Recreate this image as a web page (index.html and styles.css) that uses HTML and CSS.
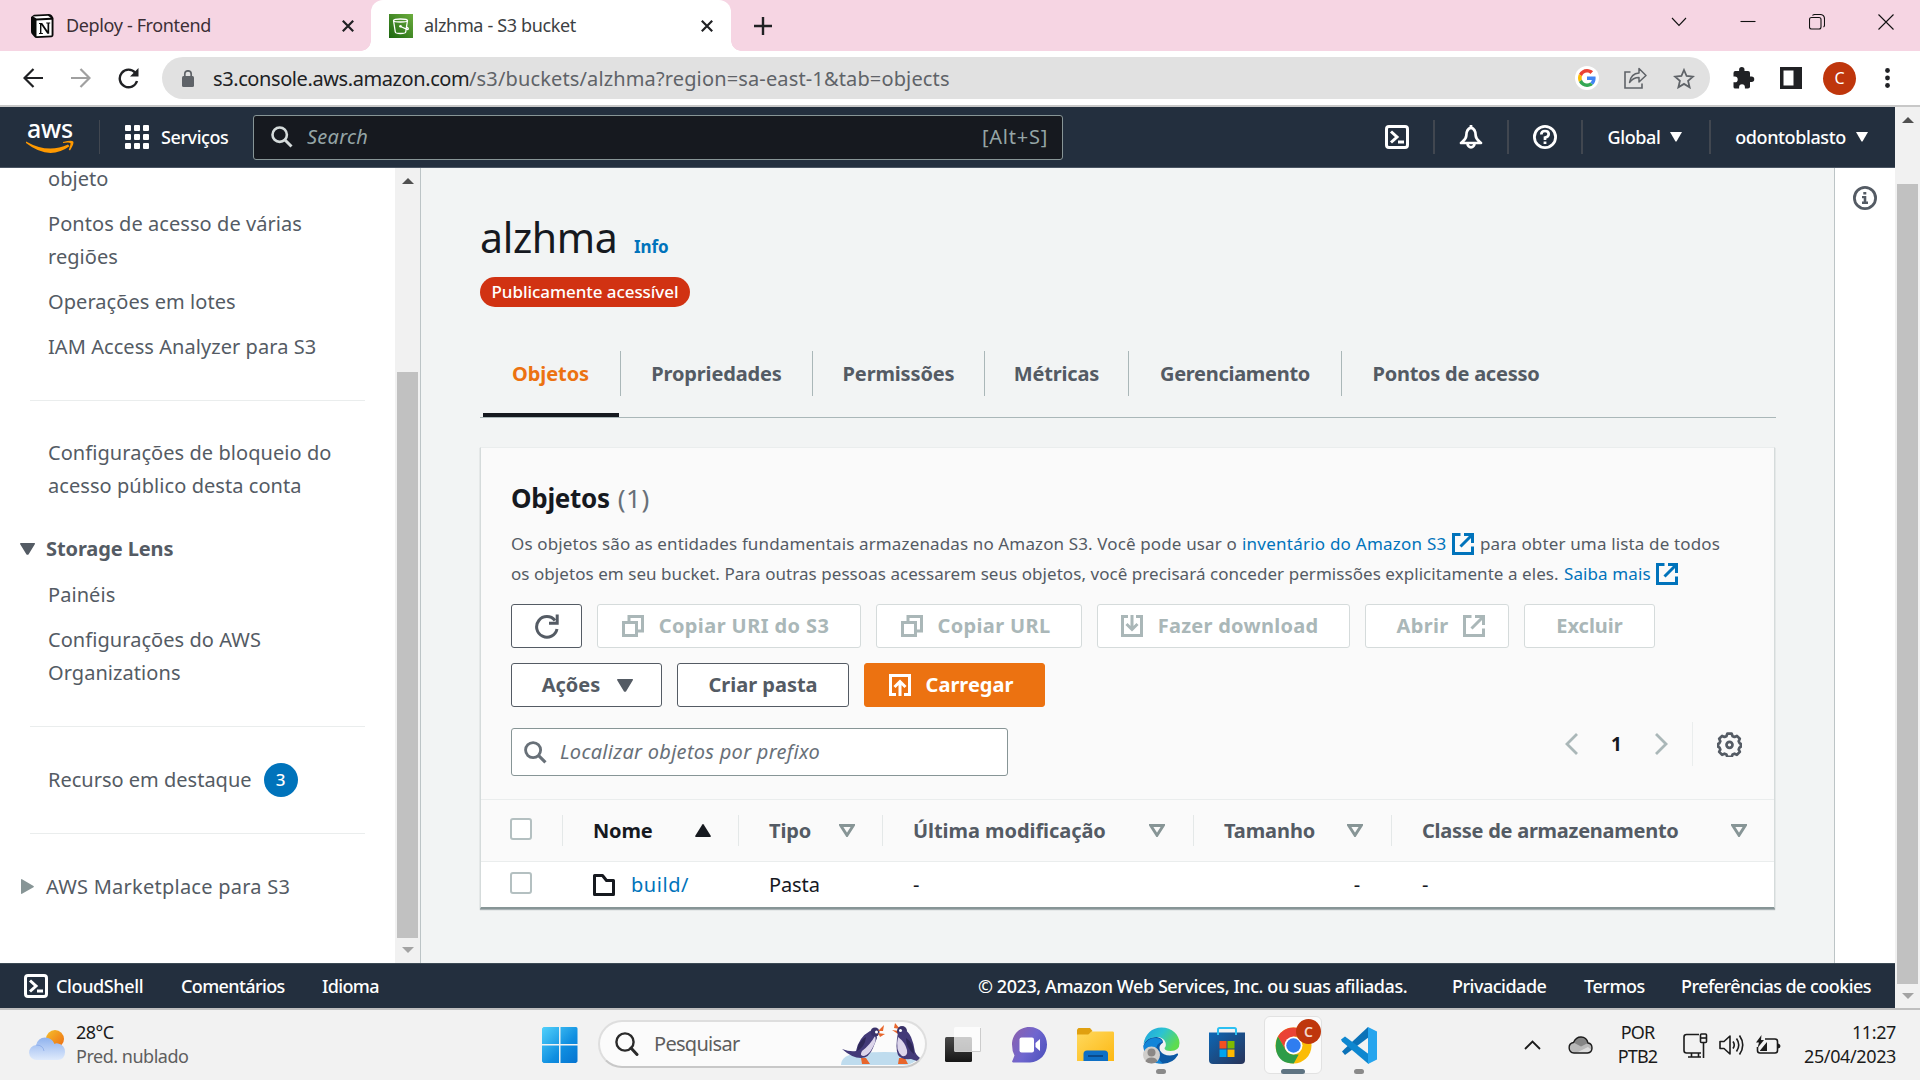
FILE: index.html
```
<!DOCTYPE html>
<html lang="pt-BR">
<head>
<meta charset="utf-8">
<title>alzhma - S3 bucket</title>
<link rel="stylesheet" href="styles.css">
</head>
<body>
<header class="tabstrip">
  <div class="btab">
    <svg width="24" height="24" viewBox="0 0 24 24"><path d="M1 3 4 0.8 19 0q2 0 3 1.600L23.500 4v17q0 2-2 2.200L7 24q-2 0-3-1.500L1.500 19.500Q1 18.500 1 17z" fill="#0a0a0a"/><path d="M3 2.500 18 1.700l2.800 2L6.500 4.600zM6.500 6.500 21.600 5.700v15.700L6.500 22.300z" fill="#fff"/><path d="M9 9h3.200l5.300 7.800V9.600h-1.300V8.500h4v1.100h-1v10.200h-1.900l-5.900-8.700v7.800h1.500v1.100H9v-1.100h1V10.100H9z" fill="#0a0a0a"/></svg>
    <span class="btab-title">Deploy - Frontend</span>
    <svg class="btab-x" width="12" height="12" viewBox="0 0 12 12"><path d="M.8.800 11.200 11.200M11.200.800.800 11.200" stroke="#202124" stroke-width="2.200"/></svg>
  </div>
  <div class="btab active">
    <svg width="24" height="24" viewBox="0 0 24 24"><defs><linearGradient id="s3" x1="0" y1="1" x2="1" y2="0"><stop offset="0" stop-color="#1b660f"/><stop offset="1" stop-color="#6cae3e"/></linearGradient></defs><path fill="url(#s3)" d="M0 0h24v24H0z"/><path d="M4.500 6.500 6.300 18q.2 1.500 5.200 1.500t5.200-1.500L18.500 6.500M4.500 6.500q0-1.500 7-1.500t7 1.500-7 1.500-7-1.500M11.500 12.500l7 3q1.500 0 .5-1.500l-1.400-1" fill="none" stroke="#fff" stroke-width="1.300"/><circle cx="11.500" cy="12.300" r="1.300" fill="#fff"/></svg>
    <span class="btab-title">alzhma - S3 bucket</span>
    <svg class="btab-x" width="12" height="12" viewBox="0 0 12 12"><path d="M.8.800 11.200 11.200M11.200.800.800 11.200" stroke="#202124" stroke-width="2.200"/></svg>
  </div>
  <svg class="newtab" width="18" height="18" viewBox="0 0 18 18"><path d="M9 0v18M0 9h18" stroke="#202124" stroke-width="2.400"/></svg>
  <div class="winctl">
    <svg width="16" height="16" viewBox="0 0 16 16"><path d="m1 4 7 7.500L15 4"/></svg>
    <svg width="16" height="16" viewBox="0 0 16 16"><path d="M.5 7.500h15"/></svg>
    <svg width="16" height="16" viewBox="0 0 16 16"><rect x=".5" y="3.500" width="11.500" height="11.500" rx="2"/><path d="M3.500 1.500Q4 .5 6 .5h5q4.500 0 4.500 4.500v6q0 1.500-1 2"/></svg>
    <svg width="16" height="16" viewBox="0 0 16 16"><path d="m.5.5 15 15M15.500.5l-15 15"/></svg>
  </div>
</header>

<div class="toolbar">
  <svg class="tb-back" width="20" height="20" viewBox="0 0 20 20"><path d="M20 10H2M10.500 1 1.500 10l9 9" fill="none" stroke="#202124" stroke-width="2.200"/></svg>
  <svg class="tb-fwd" width="20" height="20" viewBox="0 0 20 20"><path d="M0 10h18M9.500 1l9 9-9 9" fill="none" stroke="#a0a0a0" stroke-width="2.200"/></svg>
  <svg class="tb-reload" width="21" height="21" viewBox="0 0 21 21"><path d="M17.300 4.800A8.800 8.800 0 1 0 19 13" fill="none" stroke="#202124" stroke-width="2.400"/><path d="M20.500 0v8.500H12z" fill="#202124"/></svg>
  <div class="omnibox">
    <svg width="12" height="17" viewBox="0 0 12 17"><rect y="6" width="12" height="11" rx="1.500" fill="#5f6368"/><path d="M2.800 7V4a3.200 3.200 0 0 1 6.400 0v3" fill="none" stroke="#5f6368" stroke-width="1.700"/></svg>
    <span class="host">s3.console.aws.amazon.com</span><span class="path">/s3/buckets/alzhma?region=sa-east-1&amp;tab=objects</span>
    <span class="google"><svg width="18" height="18" viewBox="0 0 48 48"><path fill="#ea4335" d="M24 9.500c3.540 0 6.710 1.220 9.210 3.600l6.850-6.850C35.900 2.380 30.470 0 24 0 14.620 0 6.510 5.380 2.560 13.220l7.980 6.190C12.430 13.720 17.740 9.500 24 9.500z"/><path fill="#4285f4" d="M46.980 24.550c0-1.570-.15-3.090-.38-4.550H24v9.020h12.940c-.58 2.960-2.260 5.480-4.780 7.180l7.730 6c4.510-4.180 7.090-10.360 7.090-17.650z"/><path fill="#fbbc05" d="M10.530 28.590c-.48-1.450-.76-2.990-.76-4.590s.27-3.140.76-4.590l-7.980-6.190C.92 16.460 0 20.120 0 24c0 3.880.92 7.540 2.560 10.780l7.970-6.190z"/><path fill="#34a853" d="M24 48c6.480 0 11.930-2.130 15.890-5.810l-7.730-6c-2.150 1.450-4.920 2.300-8.160 2.300-6.260 0-11.570-4.220-13.470-9.910l-7.980 6.190C6.510 42.620 14.620 48 24 48z"/></svg></span>
    <svg class="share" width="23" height="22" viewBox="0 0 23 22"><path d="M6.500 5H1v16h17v-4.500" fill="none" stroke="#5f6368" stroke-width="1.600"/><path d="M5.500 15.500Q7 6.500 15 6V1.500l7 7-7 6.500v-4.500q-6 0-9.500 5z" fill="none" stroke="#5f6368" stroke-width="1.500" stroke-linejoin="round"/></svg>
    <svg class="star" width="22" height="21" viewBox="0 0 22 21"><path d="m11 2 2.600 6 6.400.600-4.900 4.300 1.500 6.400-5.600-3.400-5.600 3.400 1.500-6.400L2 8.600 8.400 8z" fill="none" stroke="#5f6368" stroke-width="1.800"/></svg>
  </div>
  <svg class="puzzle" width="22" height="22" viewBox="0 0 22 22"><path fill="#202124" d="M18.500 9.500H17V6q0-2-2-2h-3.500V2.700a2.700 2.700 0 0 0-5.400 0V4H2.300Q.5 4 .5 6v3.500h1.300a2.900 2.900 0 0 1 0 5.800H.5V20q0 1.500 1.800 1.500h3.800v-1.300a2.900 2.900 0 0 1 5.800 0v1.300H15q2 0 2-1.800V15h1.500a2.700 2.700 0 0 0 0-5.500z"/></svg>
  <svg class="panel" width="22" height="22" viewBox="0 0 22 22"><path fill="#202124" fill-rule="evenodd" d="M0 0h22v22H0zM3.500 3.500v15h10v-15z"/></svg>
  <span class="avatar">C</span>
  <svg width="5" height="20" viewBox="0 0 5 20"><g fill="#202124"><circle cx="2.500" cy="2.500" r="2.400"/><circle cx="2.500" cy="10" r="2.400"/><circle cx="2.500" cy="17.500" r="2.400"/></g></svg>
</div>

<div class="viewport">
 <div class="page">
  <nav class="awsnav">
    <div class="logo"><span>aws</span><svg width="48" height="14" viewBox="0 0 48 14"><path d="M0 1.500Q22 14 42 4.500l1.500 1.800Q23 21 0 3zM37 2q8.500-2.400 10.200-.6 1.200 2-3.200 9l-1.200-.6q2.300-5.800 1.500-6.800-.9-.9-7.300 0z" fill="#f90"/></svg></div>
    <div class="services">
      <svg width="24" height="24" viewBox="0 0 24 24" fill="#fff"><rect width="6" height="6" rx="1"/><rect x="9" width="6" height="6" rx="1"/><rect x="18" width="6" height="6" rx="1"/><rect y="9" width="6" height="6" rx="1"/><rect x="9" y="9" width="6" height="6" rx="1"/><rect x="18" y="9" width="6" height="6" rx="1"/><rect y="18" width="6" height="6" rx="1"/><rect x="9" y="18" width="6" height="6" rx="1"/><rect x="18" y="18" width="6" height="6" rx="1"/></svg>
      <span>Serviços</span>
    </div>
    <div class="navsearch">
      <svg width="22" height="22" viewBox="0 0 22 22"><circle cx="8.700" cy="8.700" r="7.200" fill="none" stroke="#d5dbdb" stroke-width="2.600"/><path d="m14 14 6.500 6.500" stroke="#d5dbdb" stroke-width="3"/></svg>
      <em>Search</em><span>[Alt+S]</span>
    </div>
    <div class="navright">
      <div class="ni shell"><svg width="24" height="24" viewBox="0 0 24 24"><rect x="1.500" y="1.500" width="21" height="21" rx="2.500" fill="none" stroke="#fff" stroke-width="3"/><path d="m6 6.500 6 5.500-6 5.500M13 17h6" fill="none" stroke="#fff" stroke-width="3"/></svg></div>
      <div class="ni bell"><svg width="24" height="24" viewBox="0 0 24 24"><path d="M12 2.500C8 4 7.300 7 7.300 10.500 7.300 14 4.500 15.500 2 18h20c-2.500-2.500-5.300-4-5.300-7.500C16.700 7 16 4 12 2.500z" fill="none" stroke="#fff" stroke-width="2.700" stroke-linejoin="round"/><path d="M12 0v3M8.500 18.500a3.500 3.800 0 0 0 7 0" fill="none" stroke="#fff" stroke-width="2.700"/></svg></div>
      <div class="ni help"><svg width="24" height="24" viewBox="0 0 24 24"><circle cx="12" cy="12" r="10.600" fill="none" stroke="#fff" stroke-width="2.800"/><path d="M8.300 9.500q0-3.500 3.700-3.500t3.700 3-3.700 3.600V15" fill="none" stroke="#fff" stroke-width="2.700"/><path d="M10.600 16.500h2.800V19h-2.800z" fill="#fff"/></svg></div>
      <div class="ni global"><span>Global</span><svg width="12" height="10" viewBox="0 0 12 10"><path d="M0 0h12L6.500 9.500h-1z" fill="#fff"/></svg></div>
      <div class="ni user"><span>odontoblasto</span><svg width="12" height="10" viewBox="0 0 12 10"><path d="M0 0h12L6.500 9.500h-1z" fill="#fff"/></svg></div>
    </div>
  </nav>

  <div class="body">
    <aside class="side">
      <ul class="first"><li>objeto</li><li>Pontos de acesso de várias<br>regiões</li><li>Operações em lotes</li><li>IAM Access Analyzer para S3</li></ul>
      <hr>
      <p>Configurações de bloqueio do<br>acesso público desta conta</p>
      <div class="group lens"><svg width="15" height="12" viewBox="0 0 15 12"><path d="M.5 0h14q.8.500.3 1.200L8.500 11.500q-1 .7-2 0L.2 1.200Q0 .3.5 0z" fill="#545b64"/></svg><b>Storage Lens</b></div>
      <ul><li>Painéis</li><li>Configurações do AWS<br>Organizations</li></ul>
      <hr>
      <p class="feat">Recurso em destaque<span class="count">3</span></p>
      <hr>
      <div class="group mkt"><svg width="15" height="15" viewBox="0 0 15 15"><path d="M1 .6Q1.300-.2 2 .3L13.500 7q.8.600 0 1.200L2 14.800q-.8.300-1-.4z" fill="#879596"/></svg><span>AWS Marketplace para S3</span></div>
    </aside>
    <div class="sbar inner"><i class="up"></i><div class="thumb"></div><i class="down"></i></div>

    <main>
      <div class="title"><h1>alzhma</h1><a>Info</a></div>
      <span class="pill">Publicamente acessível</span>
      <div class="tabs">
        <div class="on t1"><span>Objetos</span></div><div class="t2"><span>Propriedades</span></div><div class="t3"><span>Permissões</span></div><div class="t4"><span>Métricas</span></div><div class="t5"><span>Gerenciamento</span></div><div class="t6"><span>Pontos de acesso</span></div>
      </div>
      <section class="card">
        <div class="cardtop">
        <h2>Objetos <span>(1)</span></h2>
        <div class="desc">
          <div><span class="d1">Os objetos são as entidades fundamentais armazenadas no Amazon S3. Você pode usar o</span><a class="d2">inventário do Amazon S3</a><svg class="ext" width="22" height="22" viewBox="0 0 22 22"><path d="M8.500 1.500h-7v19h19v-7M12 1.500h8.500V10M20 2 8.500 13.500" /></svg><span class="d3">para obter uma lista de todos</span></div>
          <div><span class="d4">os objetos em seu bucket. Para outras pessoas acessarem seus objetos, você precisará conceder permissões explicitamente a eles.</span><a class="d5">Saiba mais</a><svg class="ext" width="22" height="22" viewBox="0 0 22 22"><path d="M8.500 1.500h-7v19h19v-7M12 1.500h8.500V10M20 2 8.500 13.500" /></svg></div>
        </div>
        <div class="btns">
          <div class="btn refresh"><svg width="25" height="25" viewBox="0 0 25 25"><path d="M21 6.500A10.300 10.300 0 1 0 23 15" fill="none" stroke="#545b64" stroke-width="3"/><path d="M23.200.5v8.700H15" fill="none" stroke="#545b64" stroke-width="3"/></svg></div>
          <div class="btn off b-uri"><svg width="22" height="22" viewBox="0 0 22 22"><path d="M1.500 7.500h13v13h-13zM7 7V1.500h13.500V16H15"/></svg><span>Copiar URI do S3</span></div>
          <div class="btn off b-url"><svg width="22" height="22" viewBox="0 0 22 22"><path d="M1.500 7.500h13v13h-13zM7 7V1.500h13.500V16H15"/></svg><span>Copiar URL</span></div>
          <div class="btn off b-dl"><svg width="22" height="22" viewBox="0 0 22 22"><path d="M7 1.500H1.500v19h19v-19H15M11 0v14M5.500 9l5.500 5.500L16.500 9"/></svg><span>Fazer download</span></div>
          <div class="btn off b-open"><span>Abrir</span><svg width="22" height="22" viewBox="0 0 22 22"><path d="M8.500 1.500h-7v19h19v-7M12 1.500h8.500V10M20 2 8.500 13.500"/></svg></div>
          <div class="btn off b-del"><span>Excluir</span></div>
          <div class="btn b-act"><span>Ações</span><svg width="16" height="13" viewBox="0 0 16 13"><path d="M.5 0h15q.8.500.3 1.200L9 12.500q-1 .7-2 0L.2 1.200Q0 .3.500 0z" fill="#545b64"/></svg></div>
          <div class="btn b-new"><span>Criar pasta</span></div>
          <div class="btn prim b-up"><svg width="22" height="22" viewBox="0 0 22 22"><path d="M7 20.500H1.500v-19h19v19H15M11 22V7.500M5.500 13 11 7.500l5.500 5.500"/></svg><span>Carregar</span></div>
        </div>
        <div class="filter">
          <div class="finput"><svg width="23" height="23" viewBox="0 0 22 22"><circle cx="8.700" cy="8.700" r="7.200" fill="none" stroke="#687078" stroke-width="2.700"/><path d="m14 14 6.500 6.500" stroke="#687078" stroke-width="3"/></svg><em>Localizar objetos por prefixo</em></div>
          <div class="pager">
            <svg width="13" height="22" viewBox="0 0 13 22"><path d="M12 1 2 11l10 10" /></svg><b>1</b><svg width="13" height="22" viewBox="0 0 13 22"><path d="m1 1 10 10L1 21"/></svg>
          </div>
          <svg class="gear" width="25" height="25" viewBox="0 0 25 25"><path d="M10.300 1.700h4.400l.9 2.500 1.900.8 2.400-1.100 2.900 2.900-1.100 2.400.8 1.900 1.400.9v2.600l-1.400 1-.8 1.900 1.100 2.400-2.900 2.900-2.400-1.100-1.900.8-.9 2.300h-4.400l-.9-2.300-1.900-.8-2.400 1.100-2.900-2.900 1.100-2.400-.8-1.900-1.400-1v-2.600l1.400-.9.8-1.900-1.100-2.400 2.900-2.900 2.400 1.100 1.900-.8z" fill="none" stroke="#545b64" stroke-width="2.700" stroke-linejoin="round"/><circle cx="12.500" cy="12.800" r="3" fill="none" stroke="#545b64" stroke-width="2.700"/></svg>
        </div>
        </div>
        <div class="row head">
          <div class="c0"><i class="chk"></i></div>
          <div class="c1"><span>Nome</span><svg width="16" height="13" viewBox="0 0 16 13"><path class="solid" d="M7.300.4Q8-.2 8.700.4L15.900 12q0 .8-.8 1H.9q-.8-.2-.8-1z"/></svg></div>
          <div class="c2"><span>Tipo</span><svg width="16" height="13" viewBox="0 0 16 13"><path d="M1.700 1.500h12.600L8 11.300z"/></svg></div>
          <div class="c3"><span>Última modificação</span><svg width="16" height="13" viewBox="0 0 16 13"><path d="M1.700 1.500h12.600L8 11.300z"/></svg></div>
          <div class="c4"><span>Tamanho</span><svg width="16" height="13" viewBox="0 0 16 13"><path d="M1.700 1.500h12.600L8 11.300z"/></svg></div>
          <div class="c5"><span>Classe de armazenamento</span><svg width="16" height="13" viewBox="0 0 16 13"><path d="M1.700 1.500h12.600L8 11.300z"/></svg></div>
        </div>
        <div class="row data">
          <div class="c0"><i class="chk"></i></div>
          <div class="c1"><svg width="22" height="22" viewBox="0 0 22 22"><path d="M1.500 1.500h8l4 5h7v14h-19z" fill="none" stroke="#16191f" stroke-width="3" stroke-linejoin="round"/></svg><a>build/</a></div>
          <div class="c2"><span>Pasta</span></div><div class="c3">-</div><div class="c4">-</div><div class="c5">-</div>
        </div>
      </section>
    </main>
    <div class="help-rail"><svg width="24" height="24" viewBox="0 0 24 24"><circle cx="12" cy="12" r="10.600" fill="none" stroke="#545b64" stroke-width="2.800"/><path d="M10.300 6h3v2.500h-3zM9 10h4.300v5.600H15V18H9v-2.400h1.700v-3.300H9z" fill="#545b64"/></svg></div>
  </div>

  <footer class="awsfoot">
    <svg width="24" height="24" viewBox="0 0 24 24"><rect x="1.500" y="1.500" width="21" height="21" rx="2.500" fill="none" stroke="#fff" stroke-width="3"/><path d="m6 6.500 6 5.500-6 5.500M13 17h6" fill="none" stroke="#fff" stroke-width="3"/></svg>
    <span class="f1">CloudShell</span><span class="f2">Comentários</span><span class="f3">Idioma</span>
    <span class="f4">© 2023, Amazon Web Services, Inc. ou suas afiliadas.</span><span class="f5">Privacidade</span><span class="f6">Termos</span><span class="f7">Preferências de cookies</span>
  </footer>
 </div>
 <div class="sbar outer"><i class="up"></i><div class="thumb"></div><i class="down"></i></div>
</div>

<div class="taskbar">
  <div class="weather">
    <svg width="36" height="31" viewBox="0 0 36 31"><defs><linearGradient id="sun" x1="0" y1="0" x2="1" y2="1"><stop offset="0" stop-color="#f5c02c"/><stop offset="1" stop-color="#ee6a12"/></linearGradient><linearGradient id="cl" x1="0" y1="0" x2="0" y2="1"><stop offset="0" stop-color="#8fb2ee"/><stop offset="1" stop-color="#dfeafc"/></linearGradient></defs><circle cx="26" cy="9" r="9" fill="url(#sun)"/><path d="M8 30a7.500 7.500 0 0 1-.8-15Q9 7.500 16 7.500q7 0 9.500 6.500Q27 13 29 13.500q7 1.500 7 8.500t-7 8z" fill="url(#cl)"/><path d="M7.200 15Q14 15 15 21" fill="none" stroke="#7c9fe4" stroke-width="1" opacity=".6"/></svg>
    <div><span class="w1">28°C</span><span class="w2">Pred. nublado</span></div>
  </div>
  <svg class="win" width="36" height="36" viewBox="0 0 36 36"><defs><linearGradient id="wg" x1="0" y1="0" x2="1" y2="1"><stop offset="0" stop-color="#52d1fb"/><stop offset=".6" stop-color="#0f8ee0"/><stop offset="1" stop-color="#0573d0"/></linearGradient></defs><path fill="url(#wg)" d="M1.500 0H17v17H0V1.500zM18.500 0H34q1.500 0 1.500 1.500V17h-17zM0 18.500h17V36H1.500L0 34.500zM18.500 18.500h17v16L34 36H18.500z"/></svg>
  <div class="tsearch">
    <svg class="mag" width="24" height="24" viewBox="0 0 24 24"><circle cx="10" cy="10" r="8.600" fill="none" stroke="#2a2a2a" stroke-width="2.400"/><path d="m16 16 6 6.500" stroke="#2a2a2a" stroke-width="3" stroke-linecap="round"/></svg>
    <span>Pesquisar</span>
    <svg class="peng" width="82" height="42" viewBox="0 0 82 42"><path d="M0 42q0-11 20-12 25-2 45 0 12 1 13 4-6 8-14 8z" fill="#bfdcee"/><path d="M1 26q8 3 14 2 3-14 14-20l6 1 1 6q-2 5-4 10-4 10-12 10-9 0-19-9z" fill="#433a78"/><path d="M34 13q2 4-2 11-4 8-9 9-5 0-2-5 8-6 13-15z" fill="#dcd5ea"/><path d="M25 14q-8 4-9 14 8-4 9-14z" fill="#2e2858"/><circle cx="34" cy="9" r="4.500" fill="#3a3269"/><circle cx="35.500" cy="9" r="1.500" fill="#fff"/><path d="m37 8 6-6-1 6zm0 2 7 1-5 3zM20 35h5l4 6h-8zM58 35h6l3 6h-10z" fill="#e8662c"/><path d="m59 6-5-6-1 5zm-1 2-7-1 6 4z" fill="#e8662c"/><circle cx="61" cy="8" r="5" fill="#3a3269"/><path d="M57 9q8-6 13 5 3 7 4 15 3 6 8 7l-3 3-9-3q-10 1-13-4-3-7 0-23z" fill="#433a78"/><path d="M57 14q-3 14 4 19 6 1 5-6-2-8-9-13z" fill="#dcd5ea"/><path d="M65 15q8 5 8 16-8-6-8-16z" fill="#2e2858"/><circle cx="59.500" cy="7.500" r="1.500" fill="#fff"/></svg>
  </div>
  <div class="ti taskview"><svg width="36" height="36" viewBox="0 0 36 36"><defs><linearGradient id="tv" x1="0" y1="0" x2="0" y2="1"><stop offset="0" stop-color="#4a4a4a"/><stop offset="1" stop-color="#161616"/></linearGradient></defs><rect y="10" width="27" height="25" rx="1.500" fill="url(#tv)"/><rect x="9" y="0" width="27" height="25" rx="1.500" fill="#fff" opacity=".72"/><path d="M35.500 1v23.500H10" stroke="#ccc" fill="none"/></svg></div>
  <div class="ti"><svg width="35" height="36" viewBox="0 0 35 36"><defs><linearGradient id="ch" x1="0" y1=".2" x2="1" y2=".8"><stop offset="0" stop-color="#8a62b0"/><stop offset=".5" stop-color="#6f66cf"/><stop offset="1" stop-color="#4e52bd"/></linearGradient></defs><path d="M17.500 0C28 0 35 8 35 17.500S28 35 18 35.500H1q-1.500-.500-.5-2l2-5Q0 24 0 17.500C0 8 7 0 17.500 0z" fill="url(#ch)"/><rect x="7.500" y="10.500" width="14.500" height="15" rx="2" fill="#fff"/><path d="M23.500 16 28 12v12l-4.500-4z" fill="#fff"/></svg></div>
  <div class="ti"><svg width="37" height="34" viewBox="0 0 37 34"><defs><linearGradient id="fo" x1="0" y1="0" x2="1" y2="1"><stop offset="0" stop-color="#ffd95e"/><stop offset="1" stop-color="#fdb813"/></linearGradient></defs><path d="M1.500 0H13l2.500 3-4 4H0V1.500z" fill="#e0a010"/><path d="M0 6.500h11.500L14.500 3.500H36q1 0 1 1.500v28H0z" fill="url(#fo)"/><path d="M6.500 33v-7q0-3.500 3.500-3.500h17.500q3.500 0 3.500 3.500v7z" fill="#0f6fc4"/><path d="M11 28h15" stroke="#0a4a8a" stroke-width="2"/></svg></div>
  <div class="ti run"><svg width="37" height="37" viewBox="0 0 37 37"><defs><linearGradient id="e1" x1="0" y1="0" x2="1" y2=".5"><stop offset="0" stop-color="#1d9fe0"/><stop offset=".5" stop-color="#2cc3d2"/><stop offset="1" stop-color="#5edc50"/></linearGradient></defs><path d="M.5 18.500Q3 9 14 10q6 1 6 5.500-5 3-3 8 3 5 10 5 4 0 7-2 1.500-.500 1 1.500-5 8.500-15 8.700Q1 36 .5 18.500z" fill="#0c59a4"/><path d="M.5 19Q5 10.500 13 11q6 .5 6 4-6 1-6 9 0 7 7 12.500-10 1-16-7-3.800-5-3.500-10.500z" fill="#1285d8"/><path d="M.5 17C2 7 9 .5 18.500.5 29 .5 36.500 8 36.500 16q0 8-9 8-6-.2-6-3 2-2 1-5.500-2-5.500-9-5.500Q5 10 .5 17z" fill="url(#e1)"/><circle cx="8.500" cy="28" r="8.500" fill="#d0cecb"/><circle cx="8.500" cy="25.500" r="4" fill="#8b8886"/><path d="M2.500 34.500q1-4 6-4t6 4q-2.500 2-6 2t-6-2z" fill="#8b8886"/></svg></div>
  <div class="ti"><svg width="36" height="37" viewBox="0 0 36 37"><defs><linearGradient id="st" x1="0" y1="0" x2="1" y2="1"><stop offset="0" stop-color="#0d67b5"/><stop offset="1" stop-color="#283358"/></linearGradient></defs><path d="M9 8V2.500Q9 1 10.500 1h15Q27 1 27 2.500V8" fill="none" stroke="#2cc0f2" stroke-width="2"/><path d="M0 5.500h36V33q0 4-4 4H4q-4 0-4-4z" fill="url(#st)"/><path d="M9 5v3M27 5v3" stroke="#2cc0f2" stroke-width="2"/><path fill="#f25022" d="M10.500 14h7v7.500h-7z"/><path fill="#7fba00" d="M18.500 14h7v7.500h-7z"/><path fill="#00a4ef" d="M10.500 22.500h7V30h-7z"/><path fill="#ffb900" d="M18.500 22.500h7V30h-7z"/></svg></div>
  <div class="ti tile run"><svg width="37" height="37" viewBox="0 0 37 37"><circle cx="18.500" cy="18.500" r="18" fill="#fbbc05"/><path d="M18.500.5Q28.500.5 34 9.500H18.500L10.700 23 2.900 9.500Q8.500.5 18.500.5z" fill="#ea4335"/><path d="M2.900 9.500 10.700 23q3 4.500 8 4.500h5l-5 9Q5 36.500 1.500 25-.5 16 2.900 9.500z" fill="#2e9c48"/><circle cx="18.500" cy="18.500" r="9" fill="#fff"/><circle cx="18.500" cy="18.500" r="7.200" fill="#2f7df0"/></svg><span class="badge">C</span></div>
  <div class="ti run"><svg width="37" height="37" viewBox="0 0 37 37"><path d="M27 0 4 21.500 1 24.500l3 3.500 24-18z" fill="#0b72b8"/><path d="m0 12.500 4-3L27.500 27V37L1 14.500z" fill="#0e87d0"/><path d="m27 0 9 4.500v28L27 37z" fill="#26a5ee"/></svg></div>
  <div class="tray">
    <svg class="chev" width="17" height="10" viewBox="0 0 17 10"><path d="m1 9 7.500-7.500L16 9" fill="none" stroke="#1b1b1b" stroke-width="1.800"/></svg>
    <svg class="cloud" width="25" height="18" viewBox="0 0 25 18"><path d="M6 17A5.300 5.300 0 0 1 5.500 6.500Q8 1 13 1q5.500 0 7 6 4 .5 4 5t-4.500 5z" fill="#b9b9b9"/><path d="M5.500 6.500Q8 1 13 1q5.500 0 7 6l-7 3.500z" fill="#858585"/><path d="m8 17 12-6 3.500 3-3 3z" fill="#dcdcdc"/><path d="M6 17A5.300 5.300 0 0 1 5.500 6.500Q8 1 13 1q5.500 0 7 6 4 .5 4 5t-4.500 5z" fill="none" stroke="#1b1b1b" stroke-width="1.400"/></svg>
    <div class="lang"><span>POR</span><span>PTB2</span></div>
    <svg class="net" width="25" height="25" viewBox="0 0 25 25" fill="none" stroke="#1b1b1b" stroke-width="1.600"><path d="M16 1.500H3.500Q1 1.500 1 4v13.500Q1 20 3.500 20H18M8.500 20v4M15.500 20v4M5 24h13M20.500 9.500V25"/><rect x="17.500" y="1" width="6" height="8.500" rx="1"/><path d="M17.500 5h6"/></svg>
    <svg class="vol" width="25" height="22" viewBox="0 0 25 22" fill="none" stroke="#1b1b1b" stroke-width="1.600" stroke-linejoin="round"><path d="M1 7.500h4L11 2v18l-6-5.500H1zM14 7.500q2.500 3.500 0 7M17.500 4.500q4.500 6.500 0 13M20.500 1.500q6.500 9.500 0 19"/></svg>
    <svg class="bat" width="25" height="20" viewBox="0 0 25 20"><path d="M9 4h10q2.500 0 2.500 2.500v9Q21.500 18 19 18H4q-2.500 0-2.500-2.500V12" fill="none" stroke="#1b1b1b" stroke-width="1.600"/><path d="M22 8.500q2.500.5 2.500 2.500T22 13.500zM4 15.500 11 7v9H4z" fill="#1b1b1b"/><path d="M5.500 0 0 7.500h3L1.500 13 8 5H5z" fill="#1b1b1b"/></svg>
    <div class="clock"><span>11:27</span><span>25/04/2023</span></div>
  </div>
</div>
</body>
</html>
```
FILE: styles.css
```
*{box-sizing:border-box}
body{margin:0;width:1920px;height:1080px;overflow:hidden;display:flex;flex-direction:column;font-family:"Noto Sans","Open Sans",sans-serif;font-size:20px;color:#16191f;background:#fff}
svg{display:block;flex:none}
span,a,b,em{white-space:nowrap}
ul,h1,h2,p{margin:0;padding:0;list-style:none}

.tabstrip{height:51px;flex:none;background:#f6d5e3;display:flex;align-items:center}
.btab{height:51px;display:flex;align-items:center;padding-left:30px;width:371px}
.btab.active{background:#fff;width:360px;padding-left:18px;border-radius:12px 12px 0 0;position:relative}
.btab.active::before,.btab.active::after{content:"";position:absolute;bottom:0;width:10px;height:10px}
.btab.active::before{left:-10px;background:radial-gradient(circle at 0 0,transparent 9.500px,#fff 10px)}
.btab.active::after{right:-10px;background:radial-gradient(circle at 100% 0,transparent 9.500px,#fff 10px)}
.btab-title{font-size:18px;letter-spacing:-.36px;margin-left:12px;flex:1;color:#3c2f36;padding-bottom:1px}
.active .btab-title{color:#3c4043;margin-left:11px}
.btab-x{margin-right:17px}
.active .btab-x{margin-right:18px}
.newtab{margin-left:23px}
.winctl{margin-left:auto;display:flex;gap:53px;margin-right:26px;margin-top:-8px}
.winctl svg{fill:none;stroke:#111;stroke-width:1.100}

.toolbar{height:56px;flex:none;background:#fff;border-bottom:2px solid #c8c8c8;display:flex;align-items:center}
.tb-back{margin-left:23px}
.tb-fwd{margin-left:28px}
.tb-reload{margin-left:27px}
.omnibox{margin-left:23px;width:1548px;height:42px;border-radius:21px;background:#e1e1e1;display:flex;align-items:center;padding-left:20px}
.host{margin-left:19px;letter-spacing:-.41px;color:#202124;width:256px}
.path{letter-spacing:.14px;color:#5f6368}
.google{margin-left:auto;width:24px;height:24px;border-radius:50%;background:#fff;display:flex;align-items:center;justify-content:center}
.share{margin-left:25px}
.star{margin:0 15px 0 26px}
.puzzle{margin-left:23px}
.panel{margin-left:25px}
.avatar{margin:0 29px 0 21px;width:33px;height:33px;border-radius:50%;background:#bf360c;color:#fff;font-size:16px;line-height:33px;text-align:center}

.viewport{display:flex;height:903px;flex:none;border-bottom:2px solid #bfbfbf}
.page{width:1895px;display:flex;flex-direction:column}
.sbar{width:25px;background:#f1f1f1;display:flex;flex-direction:column;align-items:center;flex:none}
.sbar .thumb{width:21px;background:#c1c1c1}
.up,.down{border:6px solid transparent}
.up{border-bottom-color:#505050;border-top:0;margin-top:10px}
.down{border-top-color:#a3a3a3;border-bottom:0}
.outer .thumb{margin-top:61px;height:800px}
.outer .down{margin-top:9px}

.awsnav{height:61px;flex:none;background:#232f3e;border-bottom:1px solid #4a5563;display:flex;align-items:center;color:#fff;font-size:18px;font-weight:500}
.logo{width:100px;padding-left:26px;height:34px;border-right:1px solid #414750}
.logo span{display:block;height:20px;font-size:25px;line-height:16px;font-weight:500;letter-spacing:-.3px;padding-left:1px}
.services{display:flex;align-items:center;width:153px;padding-left:25px}
.services span{margin-left:12px;letter-spacing:-.42px;padding-bottom:1px}
.navsearch{width:810px;height:45px;border:1px solid #879596;border-radius:3px;background:#16191f;display:flex;align-items:center;padding:0 14px 0 17px;color:#95a5a6;font-size:20px;font-weight:400}
.navsearch em{margin-left:14px;letter-spacing:.23px;flex:1;padding-bottom:1px}
.navsearch span{font-size:20px;letter-spacing:.75px;padding-bottom:1px}
.navright{margin-left:auto;display:flex;height:34px}
.ni{display:flex;align-items:center;border-right:2px solid #414750;justify-content:center}
.ni:last-child{border:0}
.shell{width:74px}.bell{width:74px}.help{width:74px}
.global{width:128px;padding-right:2px}.user{width:184px;padding-right:3px}
.ni span{letter-spacing:-.38px;padding-bottom:1px}
.ni span+svg{margin-left:10px}

.body{display:flex;height:795px;overflow:hidden}
.side{width:395px;flex:none;background:#fff;color:#545b64;line-height:33px;letter-spacing:.06px}
.side ul,.side p{padding-left:48px}
.side li{margin-bottom:12px}
.side li:last-child{margin-bottom:0}
.side .first{margin-top:-6px}
.side hr{margin:37px 30px 35px;border:0;height:1px;background:#eaeded}
.group{display:flex;align-items:center;padding-left:20px}
.group b,.group span{margin-left:11px}
.group b{letter-spacing:-.1px}
.mkt{letter-spacing:.24px}
.side .mkt{margin-top:36px}
.lens{margin:30px 0 13px}
.feat{display:flex;align-items:center;height:34px;letter-spacing:0}
.count{margin-left:12px;width:34px;height:34px;border-radius:50%;background:#0073bb;color:#fff;font-size:17px;font-weight:500;text-align:center;line-height:33px;margin-bottom:-2px}
.inner .thumb{margin-top:188px;height:566px}
.inner .down{margin-top:9px}

main{width:1414px;flex:none;background:#f2f4f4;border-left:1px solid #bcc4c6;padding:42px 58px 0 59px}
.help-rail{flex:1;background:#fff;border-left:1px solid #bcc4c6;padding:18px 0 0 18px}
.title{display:flex;align-items:baseline;height:67px;line-height:55px}
h1{font-size:41px;font-weight:400;letter-spacing:-.35px;width:154px}
a{color:#0073bb}
.title a{font-size:17px;font-weight:700;letter-spacing:-.1px}
.pill{display:block;width:210px;height:30px;border-radius:15px;background:#d13212;color:#fff;font-size:17px;font-weight:500;line-height:29px;text-align:center;letter-spacing:-.06px}
.tabs{display:flex;height:67px;margin-top:44px;border-bottom:1px solid #aab7b8;font-weight:700;color:#545b64}
.tabs div{height:45px;line-height:46px;border-right:1px solid #aab7b8;text-align:center;letter-spacing:-.15px}
.tabs .t1{width:141px;color:#ec7211;padding-left:1px;letter-spacing:-.05px}
.tabs .t1::after{content:"";display:block;width:136px;height:4px;background:#16191f;margin:16px 0 0 2px}
.t2{width:192px}.t3{width:172px}.t4{width:144px}.tabs .t5{width:213px;letter-spacing:-.29px}.tabs .t6{width:228px;border:0;letter-spacing:-.25px}

.card{margin-top:29px;width:1295px;height:462px;border:1px solid #d5dbdb;border-top-color:#eaeded;border-bottom:2px solid #879596;background:#fafafa;box-shadow:0 1px 1px rgba(0,28,36,.3)}
.cardtop{height:351px;padding:32px 0 0 30px}
h2{font-size:26px;line-height:36px;letter-spacing:-.3px;display:flex;gap:8px}
h2 span{font-weight:400;letter-spacing:.5px;color:#687078}
.desc{margin-top:13px;font-size:17px;line-height:28px;color:#545b64}
.desc div{display:flex;align-items:center;height:30px}
.d1{width:731px;letter-spacing:.13px}.d2{width:210px;letter-spacing:.23px}.d3{margin-left:6px;letter-spacing:.15px}
.d4{width:1053px;letter-spacing:.055px}.d5{width:92px;letter-spacing:.1px}
.ext{fill:none;stroke:#0073bb;stroke-width:3}
.btns{display:flex;flex-wrap:wrap;gap:15px;margin-top:15px;width:1200px}
.btn{height:44px;border:1px solid #545b64;border-radius:3px;background:#fff;color:#545b64;font-weight:700;display:flex;align-items:center;justify-content:center}
.btn span{padding-bottom:2px}
.btn.off{border-color:#d5dbdb;color:#aab7b8}
.btn.off svg{fill:none;stroke:#aab7b8;stroke-width:3}
.btn svg+span{margin-left:15px}
.btn span+svg{margin-left:17px}
.refresh{width:71px}
.b-uri{width:264px;letter-spacing:.41px;padding-right:7px}
.b-url{width:206px;letter-spacing:.35px;padding-right:7px}
.b-dl{width:253px;letter-spacing:.27px;padding-right:8px}
.b-open{width:144px;letter-spacing:.3px;padding-left:8px}
.btn.b-open svg{margin-left:15px}
.b-del{width:131px;letter-spacing:0}
.b-act{width:151px;padding-left:2px}.b-new{width:172px}
.b-up{width:181px;padding-right:7px}
.btn.prim{background:#ec7211;border-color:#ec7211;color:#fff}
.prim svg{fill:none;stroke:#fff;stroke-width:3}
.filter{display:flex;margin-top:21px}
.finput{width:497px;height:48px;border:1px solid #879596;border-radius:3px;background:#fff;display:flex;align-items:center;padding-left:12px;color:#687078}
.finput em{letter-spacing:.28px;margin-left:13px;padding-bottom:1px}
.pager{position:relative;display:flex;align-items:center;justify-content:space-between;width:103px;height:32px;margin-left:557px}
.pager svg{fill:none;stroke:#aab7b8;stroke-width:2.800}
.pager b{font-size:19px}
.gear{margin:4px 0 0 49px}
.pager::after{content:"";position:absolute;left:127px;top:-6px;width:1px;height:44px;background:#eaeded}
.row{display:flex;border-top:1px solid #eaeded}
.row>div{display:flex;align-items:center;flex:none}
.head{height:62px;font-weight:700;color:#545b64;align-items:center}
.head>div{height:31px;border-right:1px solid #e4e8e8}
.head>div:last-child{border:0}
.head svg{margin-left:auto;fill:none;stroke:#879596;stroke-width:2.900}
.head .solid{fill:#16191f;stroke:none}
.data{height:46px;background:#fff}
.row .c0{width:82px;padding-left:29px}
.chk{width:22px;height:22px;border:2px solid #b4c0c1;border-radius:3px;background:#fff;margin-top:-3px}
.c1{width:176px;padding:0 27px 0 30px}
.head .c1{color:#16191f;letter-spacing:-.15px}
.c1 a{margin-left:16px;letter-spacing:.55px}
.c2{width:144px;padding:0 27px 0 30px;letter-spacing:-.1px}
.c3{width:311px;padding:0 28px 0 30px}
.head .c3{letter-spacing:-.06px}
.c4{width:198px;padding:0 28px 0 30px;letter-spacing:-.1px}
.data .c4{justify-content:flex-end;padding-right:32px}
.c5{width:381px;padding:0 26px 0 30px}
.head .c5{letter-spacing:-.26px}

.awsfoot{height:45px;background:#232f3e;border-top:1px solid #3c4a55;display:flex;align-items:center;color:#fff;font-size:18px;font-weight:500;padding-left:24px}
.awsfoot span{padding-bottom:1px}
.f1{margin-left:8px;width:125px;letter-spacing:-.38px}
.f2{width:141px;letter-spacing:-.62px}
.f3{width:656px;letter-spacing:-.65px}
.f4{width:474px;letter-spacing:-.42px}
.f5{width:132px;letter-spacing:-.5px}
.f6{width:97px;letter-spacing:-.45px}
.f7{letter-spacing:-.55px}

.taskbar{height:70px;flex:none;background:#f2f2f2;display:flex;align-items:center}
.weather{display:flex;width:542px;padding-left:29px;align-items:center}
.weather div{margin-left:11px;display:flex;flex-direction:column;line-height:24px;font-size:18px;margin-top:-3px}
.w1{letter-spacing:-.5px;color:#1b1b1b}.w2{letter-spacing:-.48px;color:#5e5e5e}
.tsearch{margin-left:20px;width:329px;height:48px;margin-top:-3px;border:2px solid #dedede;border-bottom-color:#c8c8c8;border-radius:24px;background:#fbfbfb;display:flex;align-items:center;overflow:hidden}
.tsearch .mag{margin-left:15px}
.tsearch span{margin-left:15px;letter-spacing:-.7px;color:#5e5e5e;width:187px}
.ti{width:66px;height:58px;display:flex;align-items:center;justify-content:center;position:relative;flex:none}
.taskview{margin-left:3px}
.ti.run::after{content:"";position:absolute;left:28px;bottom:0;width:10px;height:5px;border-radius:3px;background:#8a8a8a}
.tile{z-index:0}
.tile::before{content:"";position:absolute;inset:0 4px;border-radius:6px;background:#fbfbfb;border:1px solid #e2e2e2;z-index:-1}
.ti.tile::after{left:21px;width:24px;background:#5f7482}
.badge{position:absolute;left:36px;top:3px;width:25px;height:25px;border-radius:50%;background:#bf360c;color:#f3d6cb;font-size:14px;font-weight:600;line-height:25px;text-align:center}
.tray{margin-left:auto;display:flex;align-items:center;font-size:18px;color:#1b1b1b}
.tray div{display:flex;flex-direction:column;line-height:24px;margin-top:-3px}
.cloud{margin-left:27px}
.lang{align-items:center;width:43px;margin-left:23px;letter-spacing:-.8px}
.net{margin-left:24px}
.vol{margin-left:11px}
.bat{margin-left:12px}
.clock{align-items:flex-end;width:94px;margin:0 24px 0 21px;letter-spacing:-.38px}
```
